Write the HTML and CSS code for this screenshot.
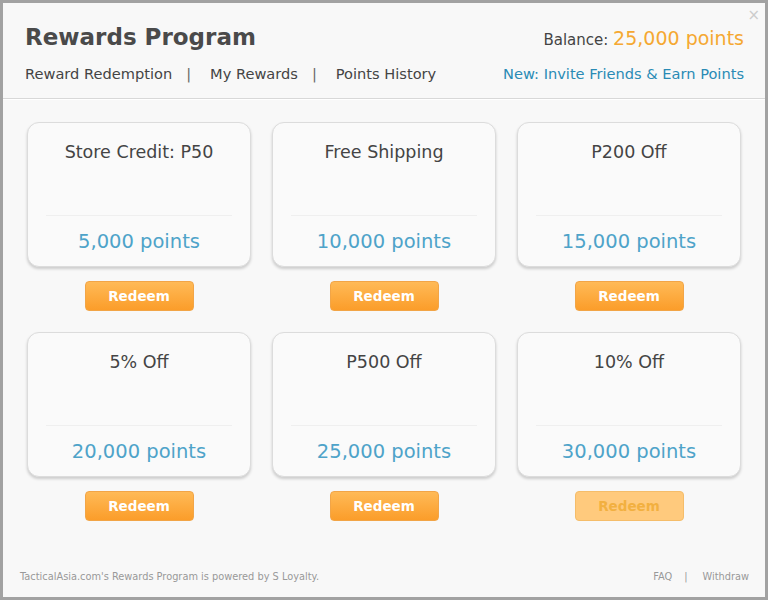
FILE: index.html
```html
<!DOCTYPE html>
<html>
  <head>
    <meta charset="utf-8">
    <title>Rewards Program</title>
    <link rel="stylesheet" href="styles.css">
  </head>
  <body>
    <div class="dialog">
      <span class="close">&times;</span>
      <header class="head">
        <div class="head-row">
          <h1>Rewards Program</h1>
          <div class="balance">Balance: <span class="balance-value">25,000 points</span></div>
        </div>
        <div class="head-row nav-row">
          <nav class="nav">
            <a href="#">Reward Redemption</a><span class="sep">|</span><a href="#">My Rewards</a><span class="sep">|</span><a href="#">Points History</a>
          </nav>
          <a class="invite" href="#">New: Invite Friends &amp; Earn Points</a>
        </div>
      </header>
      <main class="rewards">
        <div class="reward">
          <div class="card">
            <div class="card-title">Store Credit: P50</div>
            <div class="card-points">5,000 points</div>
          </div>
          <button class="redeem">Redeem</button>
        </div>
        <div class="reward">
          <div class="card">
            <div class="card-title">Free Shipping</div>
            <div class="card-points">10,000 points</div>
          </div>
          <button class="redeem">Redeem</button>
        </div>
        <div class="reward">
          <div class="card">
            <div class="card-title">P200 Off</div>
            <div class="card-points">15,000 points</div>
          </div>
          <button class="redeem">Redeem</button>
        </div>
        <div class="reward">
          <div class="card">
            <div class="card-title">5% Off</div>
            <div class="card-points">20,000 points</div>
          </div>
          <button class="redeem">Redeem</button>
        </div>
        <div class="reward">
          <div class="card">
            <div class="card-title">P500 Off</div>
            <div class="card-points">25,000 points</div>
          </div>
          <button class="redeem">Redeem</button>
        </div>
        <div class="reward">
          <div class="card">
            <div class="card-title">10% Off</div>
            <div class="card-points">30,000 points</div>
          </div>
          <button class="redeem" disabled>Redeem</button>
        </div>
      </main>
      <footer class="foot">
        <p>TacticalAsia.com's Rewards Program is powered by S Loyalty.</p>
        <p class="foot-links"><a href="#">FAQ</a><span class="sep">|</span><a href="#">Withdraw</a></p>
      </footer>
    </div>
  </body>
</html>
```

FILE: styles.css
```css
html, body { margin: 0; padding: 0; height: 100%; }
body { background: #a2a2a2; padding: 3px; box-sizing: border-box; font-family: "DejaVu Sans", sans-serif; color: #444; }
a { text-decoration: none; color: inherit; }

.dialog { position: relative; height: 594px; background: #f8f8f8; display: flex; flex-direction: column; }
.close { position: absolute; top: 5px; right: 5px; color: #ccc; font-size: 15px; line-height: 1; }

.head { padding: 19px 21px 0 22px; height: 76px; border-bottom: 1px solid #d8d8d8; box-shadow: 0 1px 0 #fff; }
.head-row { display: flex; justify-content: space-between; align-items: baseline; }
.head h1 { margin: 0; font-size: 23px; font-weight: bold; color: #4a4a4a; line-height: 30px; }
.balance { font-size: 15px; color: #444; }
.balance-value { font-size: 19px; color: #f5a832; }
.nav-row { margin-top: 13px; font-size: 14.6px; }
.nav .sep { margin: 0 19px 0 14px; color: #666; }
.invite { color: #2a8bb5; }

.rewards { display: grid; grid-template-columns: repeat(3, 224px); column-gap: 21px; row-gap: 21px; padding: 23px 24px 0; }
.reward { display: flex; flex-direction: column; align-items: center; }
.card { box-sizing: border-box; width: 224px; height: 145px; background: #fafafa; border: 1px solid #dcdcdc; border-radius: 12px; box-shadow: 0 2px 3px rgba(0,0,0,0.18); display: flex; flex-direction: column; text-align: center; }
.card-title { font-size: 17.5px; color: #444; padding-top: 19px; height: 73px; border-bottom: 1px solid #efefef; margin: 0 18px; }
.card-points { font-size: 19.5px; color: #4ea3c9; padding-top: 14px; }

.redeem { margin-top: 14px; width: 109px; height: 30px; border: 1px solid #f2a547; border-radius: 4px; background: linear-gradient(#ffba57, #fb9d2a); color: #fff; font-family: "DejaVu Sans", sans-serif; font-weight: bold; font-size: 13.5px; cursor: pointer; }
.redeem:disabled { background: #ffca7d; border-color: #f5bd6a; color: #f2b040; cursor: default; }

.foot { margin-top: auto; display: flex; justify-content: space-between; padding: 0 16px 15px 17px; font-size: 9.8px; color: #999; }
.foot p { margin: 0; }
.foot-links .sep { margin: 0 15px 0 12px; }
```
